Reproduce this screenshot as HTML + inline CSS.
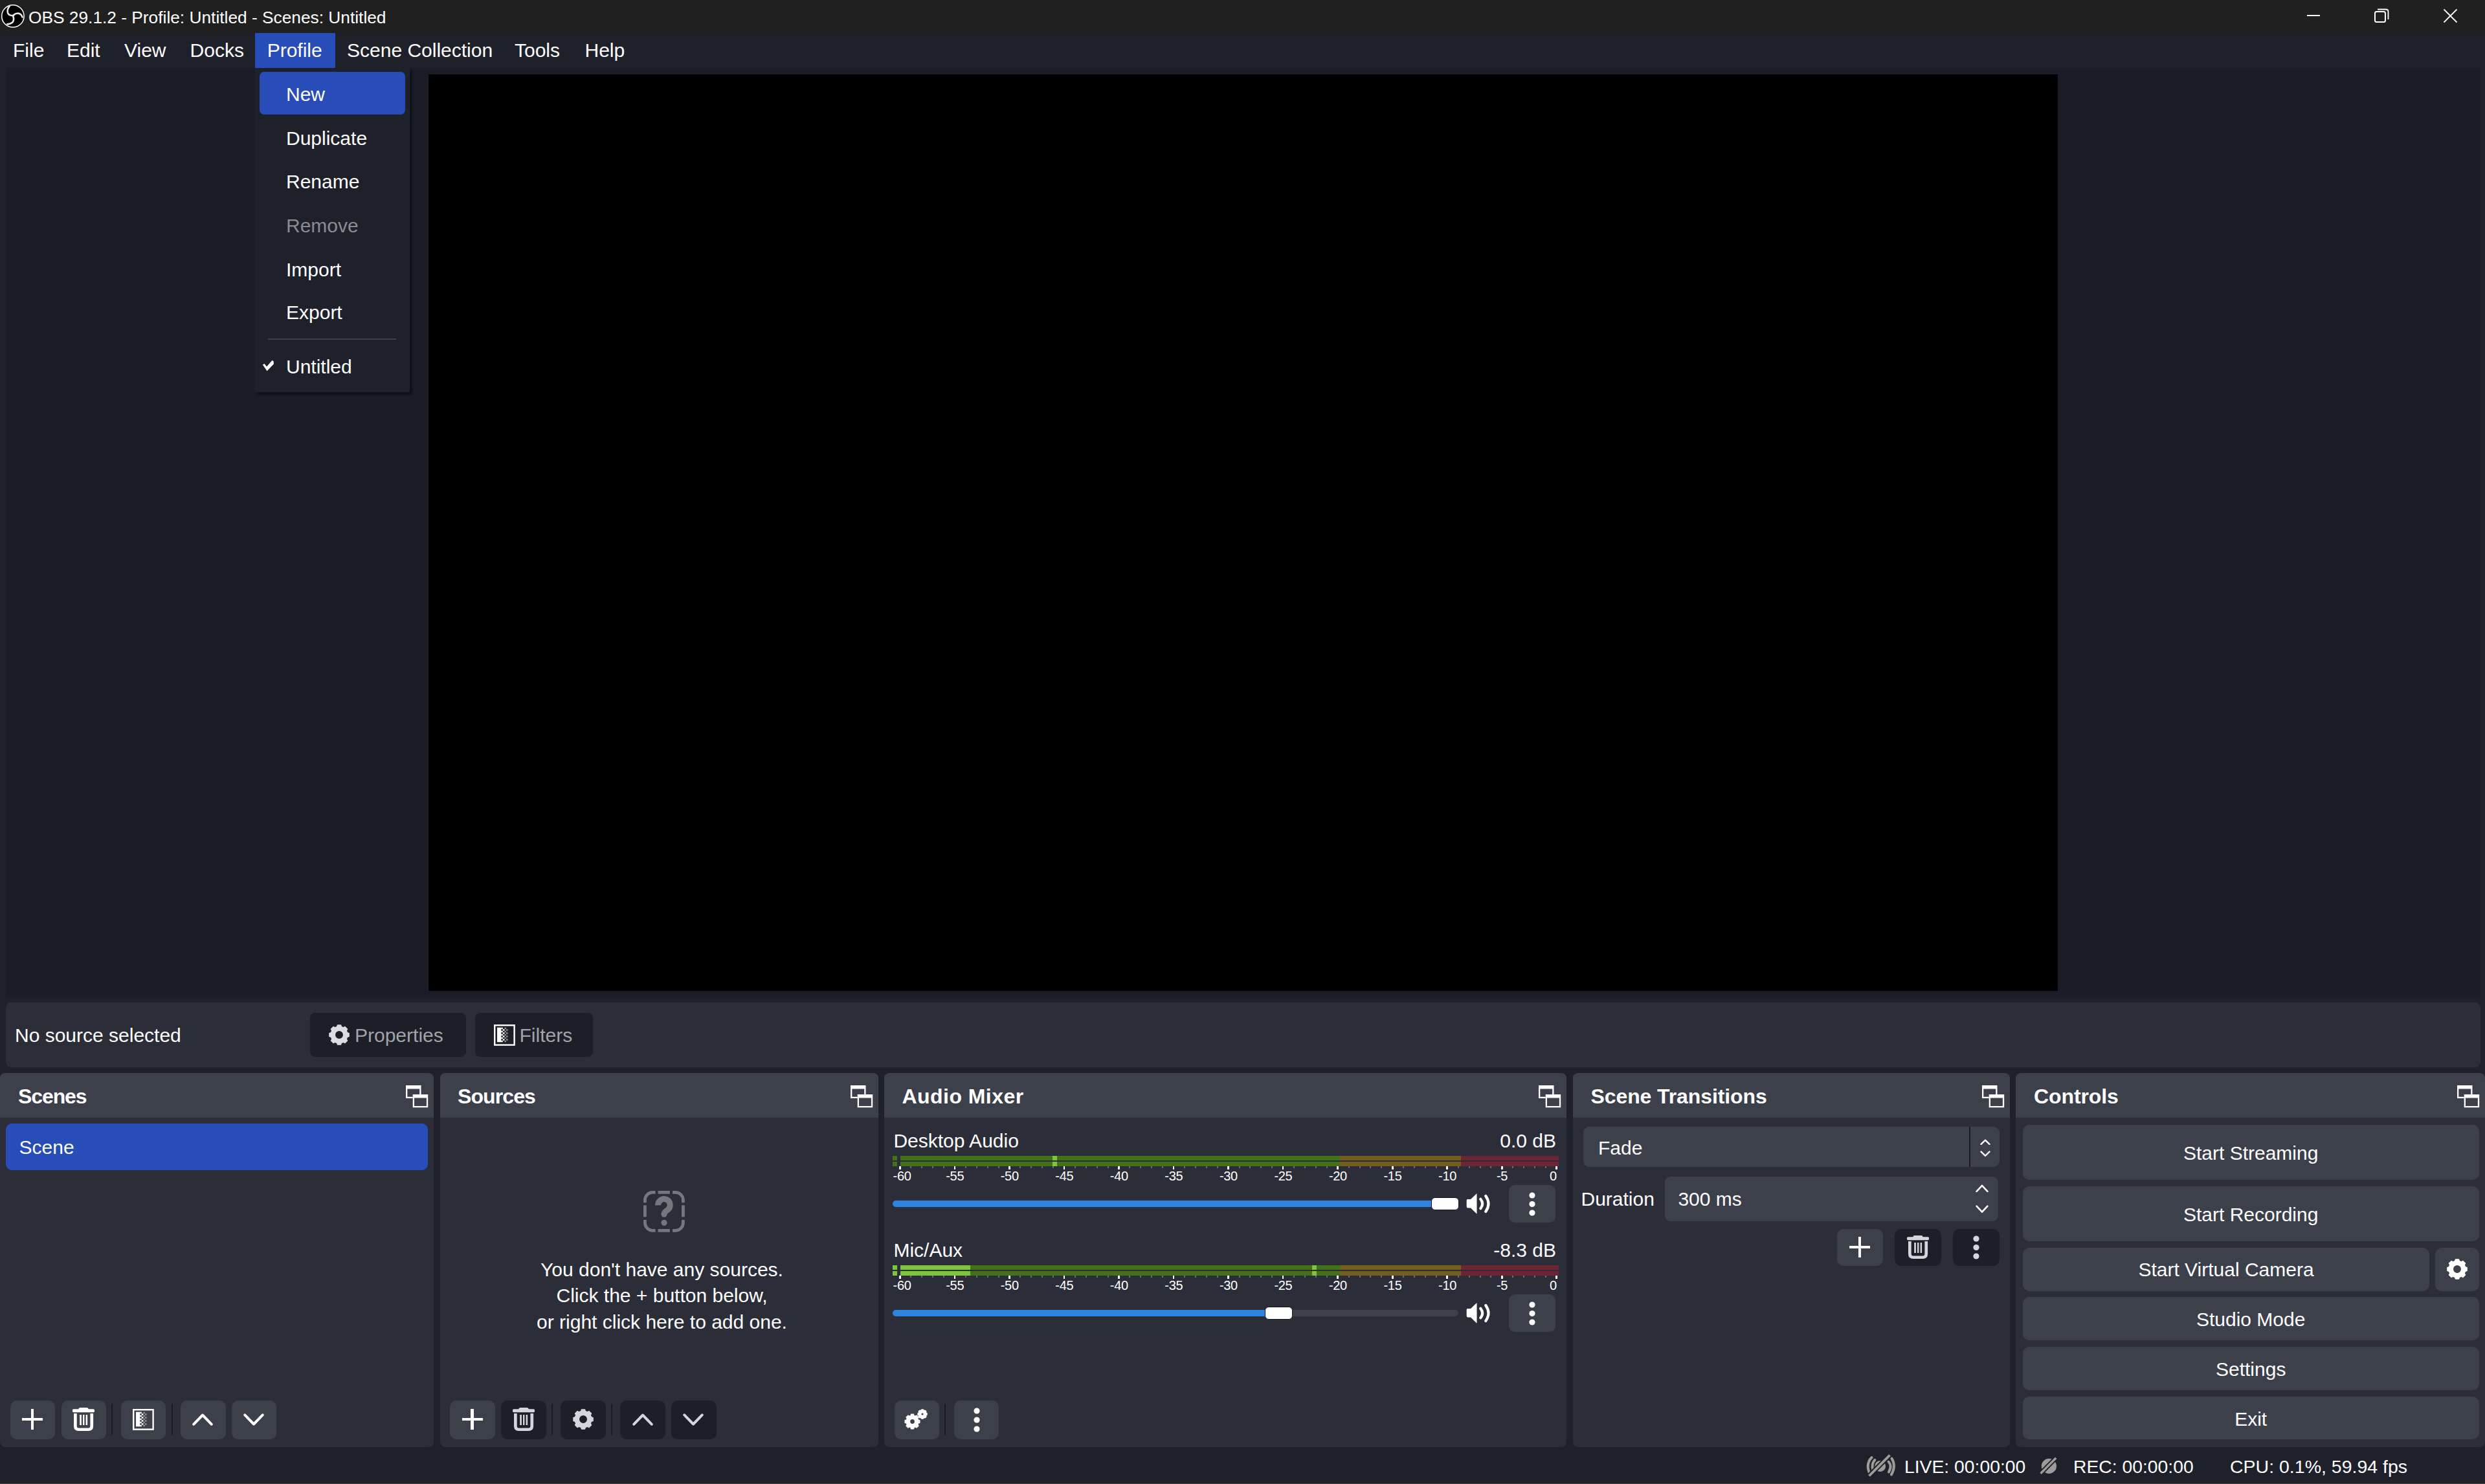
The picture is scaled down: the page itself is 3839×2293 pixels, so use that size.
<!DOCTYPE html>
<html><head><meta charset="utf-8"><style>
html,body{margin:0;padding:0;}
body{width:3839px;height:2293px;overflow:hidden;position:relative;background:#1f212a;font-family:"Liberation Sans",sans-serif;color:#fff;}
div,svg{box-sizing:border-box;}
</style></head><body>
<div style="position:absolute;left:0px;top:0px;width:3839px;height:51px;background:#202020;border-radius:0px;"></div>
<svg style="position:absolute;left:0px;top:5px;" width="40" height="40" viewBox="0 0 40 40"><circle cx="19.9" cy="19.9" r="17.2" fill="#000" stroke="#fff" stroke-width="1.5"/><path d="M14.9 4.3 Q10.5 9 12 15 Q14 19.5 21 19.1" fill="none" stroke="#e8e8e8" stroke-width="2.6" stroke-linecap="round"/><path d="M21 18.3 Q24 15.5 28.2 15.5 Q33 16.5 34.6 21.6" fill="none" stroke="#e8e8e8" stroke-width="2.6" stroke-linecap="round"/><path d="M20.1 20 Q22.5 25.5 19.3 29.6 Q16 32.5 11.3 32.4" fill="none" stroke="#e8e8e8" stroke-width="2.6" stroke-linecap="round"/></svg>
<div style="position:absolute;top:13.94px;font-size:26.3px;font-weight:400;color:#fff;line-height:1;white-space:pre;left:44px;">OBS 29.1.2 - Profile: Untitled - Scenes: Untitled</div>
<div style="position:absolute;left:3564px;top:23px;width:20px;height:2px;background:#fff;border-radius:0px;"></div>
<svg style="position:absolute;left:3668px;top:13px;" width="23" height="23" viewBox="0 0 23 23"><rect x="1" y="5" width="16" height="16" rx="2.5" fill="none" stroke="#fff" stroke-width="2"/><path d="M5 1.5 H18 Q21.5 1.5 21.5 5 V17" fill="none" stroke="#fff" stroke-width="1.8"/></svg>
<svg style="position:absolute;left:3774px;top:13px;" width="23" height="23" viewBox="0 0 23 23"><path d="M1.5 1.5 L21.5 21.5 M21.5 1.5 L1.5 21.5" stroke="#fff" stroke-width="1.8"/></svg>
<div style="position:absolute;left:0px;top:51px;width:3839px;height:54px;background:#1f212a;border-radius:0px;"></div>
<div style="position:absolute;left:394px;top:51px;width:124px;height:54px;background:#284cb8;border-radius:0px;"></div>
<div style="position:absolute;top:62.61px;font-size:30px;font-weight:400;color:#fff;line-height:1;white-space:pre;left:20px;">File</div>
<div style="position:absolute;top:62.61px;font-size:30px;font-weight:400;color:#fff;line-height:1;white-space:pre;left:103px;">Edit</div>
<div style="position:absolute;top:62.61px;font-size:30px;font-weight:400;color:#fff;line-height:1;white-space:pre;left:192px;">View</div>
<div style="position:absolute;top:62.61px;font-size:30px;font-weight:400;color:#fff;line-height:1;white-space:pre;left:293.6px;">Docks</div>
<div style="position:absolute;top:62.61px;font-size:30px;font-weight:400;color:#fff;line-height:1;white-space:pre;left:412.7px;">Profile</div>
<div style="position:absolute;top:62.61px;font-size:30px;font-weight:400;color:#fff;line-height:1;white-space:pre;left:536px;">Scene Collection</div>
<div style="position:absolute;top:62.61px;font-size:30px;font-weight:400;color:#fff;line-height:1;white-space:pre;left:795px;">Tools</div>
<div style="position:absolute;top:62.61px;font-size:30px;font-weight:400;color:#fff;line-height:1;white-space:pre;left:903.5px;">Help</div>
<div style="position:absolute;left:9px;top:105px;width:3823px;height:1436px;background:#1a1c27;border-radius:0px;"></div>
<div style="position:absolute;left:662px;top:115px;width:2517px;height:1416px;background:#000;border-radius:0px;"></div>
<div style="position:absolute;left:394px;top:105px;width:239px;height:500.5px;background:#1f212a;border-radius:0px;box-shadow:4px 4px 3px rgba(0,0,0,0.38);"></div>
<div style="position:absolute;left:401px;top:111px;width:225px;height:66px;background:#284cb8;border-radius:7px;"></div>
<div style="position:absolute;top:131.20px;font-size:30px;font-weight:400;color:#fff;line-height:1;white-space:pre;left:442px;">New</div>
<div style="position:absolute;top:198.91px;font-size:30px;font-weight:400;color:#fff;line-height:1;white-space:pre;left:442px;">Duplicate</div>
<div style="position:absolute;top:266.21px;font-size:30px;font-weight:400;color:#fff;line-height:1;white-space:pre;left:442px;">Rename</div>
<div style="position:absolute;top:333.61px;font-size:30px;font-weight:400;color:#8a8b90;line-height:1;white-space:pre;left:442px;">Remove</div>
<div style="position:absolute;top:401.61px;font-size:30px;font-weight:400;color:#fff;line-height:1;white-space:pre;left:442px;">Import</div>
<div style="position:absolute;top:468.31px;font-size:30px;font-weight:400;color:#fff;line-height:1;white-space:pre;left:442px;">Export</div>
<div style="position:absolute;top:552.11px;font-size:30px;font-weight:400;color:#fff;line-height:1;white-space:pre;left:442px;">Untitled</div>
<div style="position:absolute;left:414px;top:523px;width:198px;height:2px;background:#3c404b;border-radius:0px;"></div>
<svg style="position:absolute;left:405px;top:556px;" width="19" height="18" viewBox="0 0 19 18"><path d="M0.8 7.5 L3.5 6 L7 10.5 L15.5 0.8 L17.8 2.5 L17.8 6.5 L7.5 17.2 Z" fill="#fff"/></svg>
<div style="position:absolute;left:9px;top:1549px;width:3823px;height:99.5px;background:#2b2e38;border-radius:8px;"></div>
<div style="position:absolute;top:1585.40px;font-size:30px;font-weight:400;color:#fff;line-height:1;white-space:pre;left:23px;">No source selected</div>
<div style="position:absolute;left:479px;top:1565px;width:241px;height:67.59999999999991px;background:#1c1e28;border-radius:8px;"></div>
<div style="position:absolute;left:734px;top:1565px;width:181.5px;height:67.59999999999991px;background:#1c1e28;border-radius:8px;"></div>
<div style="position:absolute;top:1584.61px;font-size:30px;font-weight:400;color:#a3a3a6;line-height:1;white-space:pre;left:548px;">Properties</div>
<div style="position:absolute;top:1584.61px;font-size:30px;font-weight:400;color:#a3a3a6;line-height:1;white-space:pre;left:802.5px;">Filters</div>
<div style="position:absolute;left:0px;top:1658px;width:670px;height:577.5px;background:#2b2e38;border-radius:8px;"></div>
<div style="position:absolute;left:0px;top:1658px;width:670px;height:69px;background:#3c404b;border-radius:0px;border-radius:8px 8px 0 0;"></div>
<div style="position:absolute;top:1678.31px;font-size:32px;font-weight:700;color:#fff;line-height:1;white-space:pre;letter-spacing:-1.1px;left:28px;">Scenes</div>
<svg style="position:absolute;left:626.8px;top:1676.8px;" width="35" height="35" viewBox="0 0 35 35"><path fill-rule="evenodd" fill="#fff" d="M0 0 H23.5 V20 H0 Z M2.3 5.5 V17.7 H21.2 V5.5 Z"/><rect x="10.7" y="14" width="23.5" height="20.2" fill="#3c404b"/><path fill-rule="evenodd" fill="#fff" d="M10.7 14 H34.2 V34.2 H10.7 Z M13 19.5 V31.9 H31.9 V19.5 Z"/></svg>
<div style="position:absolute;left:680px;top:1658px;width:677px;height:577.5px;background:#2b2e38;border-radius:8px;"></div>
<div style="position:absolute;left:680px;top:1658px;width:677px;height:69px;background:#3c404b;border-radius:0px;border-radius:8px 8px 0 0;"></div>
<div style="position:absolute;top:1678.31px;font-size:32px;font-weight:700;color:#fff;line-height:1;white-space:pre;letter-spacing:-0.9px;left:707px;">Sources</div>
<svg style="position:absolute;left:1313.8px;top:1676.8px;" width="35" height="35" viewBox="0 0 35 35"><path fill-rule="evenodd" fill="#fff" d="M0 0 H23.5 V20 H0 Z M2.3 5.5 V17.7 H21.2 V5.5 Z"/><rect x="10.7" y="14" width="23.5" height="20.2" fill="#3c404b"/><path fill-rule="evenodd" fill="#fff" d="M10.7 14 H34.2 V34.2 H10.7 Z M13 19.5 V31.9 H31.9 V19.5 Z"/></svg>
<div style="position:absolute;left:1366px;top:1658px;width:1054px;height:577.5px;background:#2b2e38;border-radius:8px;"></div>
<div style="position:absolute;left:1366px;top:1658px;width:1054px;height:69px;background:#3c404b;border-radius:0px;border-radius:8px 8px 0 0;"></div>
<div style="position:absolute;top:1678.31px;font-size:32px;font-weight:700;color:#fff;line-height:1;white-space:pre;letter-spacing:0.45px;left:1393.5px;">Audio Mixer</div>
<svg style="position:absolute;left:2376.8px;top:1676.8px;" width="35" height="35" viewBox="0 0 35 35"><path fill-rule="evenodd" fill="#fff" d="M0 0 H23.5 V20 H0 Z M2.3 5.5 V17.7 H21.2 V5.5 Z"/><rect x="10.7" y="14" width="23.5" height="20.2" fill="#3c404b"/><path fill-rule="evenodd" fill="#fff" d="M10.7 14 H34.2 V34.2 H10.7 Z M13 19.5 V31.9 H31.9 V19.5 Z"/></svg>
<div style="position:absolute;left:2430px;top:1658px;width:675px;height:577.5px;background:#2b2e38;border-radius:8px;"></div>
<div style="position:absolute;left:2430px;top:1658px;width:675px;height:69px;background:#3c404b;border-radius:0px;border-radius:8px 8px 0 0;"></div>
<div style="position:absolute;top:1678.31px;font-size:32px;font-weight:700;color:#fff;line-height:1;white-space:pre;letter-spacing:-0.1px;left:2457.5px;">Scene Transitions</div>
<svg style="position:absolute;left:3061.8px;top:1676.8px;" width="35" height="35" viewBox="0 0 35 35"><path fill-rule="evenodd" fill="#fff" d="M0 0 H23.5 V20 H0 Z M2.3 5.5 V17.7 H21.2 V5.5 Z"/><rect x="10.7" y="14" width="23.5" height="20.2" fill="#3c404b"/><path fill-rule="evenodd" fill="#fff" d="M10.7 14 H34.2 V34.2 H10.7 Z M13 19.5 V31.9 H31.9 V19.5 Z"/></svg>
<div style="position:absolute;left:3114px;top:1658px;width:725px;height:577.5px;background:#2b2e38;border-radius:8px;"></div>
<div style="position:absolute;left:3114px;top:1658px;width:725px;height:69px;background:#3c404b;border-radius:0px;border-radius:8px 8px 0 0;"></div>
<div style="position:absolute;top:1678.31px;font-size:32px;font-weight:700;color:#fff;line-height:1;white-space:pre;letter-spacing:-0.1px;left:3142px;">Controls</div>
<svg style="position:absolute;left:3795.8px;top:1676.8px;" width="35" height="35" viewBox="0 0 35 35"><path fill-rule="evenodd" fill="#fff" d="M0 0 H23.5 V20 H0 Z M2.3 5.5 V17.7 H21.2 V5.5 Z"/><rect x="10.7" y="14" width="23.5" height="20.2" fill="#3c404b"/><path fill-rule="evenodd" fill="#fff" d="M10.7 14 H34.2 V34.2 H10.7 Z M13 19.5 V31.9 H31.9 V19.5 Z"/></svg>
<svg style="position:absolute;left:506.0px;top:1581.0px;" width="36" height="36" viewBox="0 0 36 36"><path fill-rule="evenodd" fill="#dcdde3" stroke="#dcdde3" stroke-width="1.8" stroke-linejoin="round" d="M14.99 5.56 L15.52 3.10 L20.48 3.10 L21.01 5.56 L24.67 7.07 L26.78 5.71 L30.29 9.22 L28.93 11.33 L30.44 14.99 L32.90 15.52 L32.90 20.48 L30.44 21.01 L28.93 24.67 L30.29 26.78 L26.78 30.29 L24.67 28.93 L21.01 30.44 L20.48 32.90 L15.52 32.90 L14.99 30.44 L11.33 28.93 L9.22 30.29 L5.71 26.78 L7.07 24.67 L5.56 21.01 L3.10 20.48 L3.10 15.52 L5.56 14.99 L7.07 11.33 L5.71 9.22 L9.22 5.71 L11.33 7.07Z M24.88 18.00 A6.88 6.88 0 1 0 11.12 18.00 A6.88 6.88 0 1 0 24.88 18.00Z"/></svg>
<svg style="position:absolute;left:762.5px;top:1582.5px;" width="33" height="33" viewBox="0 0 33 33"><rect x="1.2" y="1.2" width="30.4" height="30.4" fill="none" stroke="#fff" stroke-width="2.4"/><rect x="5" y="4.7" width="6.2" height="22.5" fill="#fff"/><rect x="11.2" y="4.7" width="2.6" height="2.5" fill="#fff"/><rect x="16.4" y="4.7" width="2.6" height="2.5" fill="#8a8c92"/><rect x="13.8" y="7.2" width="2.6" height="2.5" fill="#fff"/><rect x="19.0" y="7.2" width="2.6" height="2.5" fill="#8a8c92"/><rect x="11.2" y="9.7" width="2.6" height="2.5" fill="#fff"/><rect x="16.4" y="9.7" width="2.6" height="2.5" fill="#8a8c92"/><rect x="13.8" y="12.2" width="2.6" height="2.5" fill="#fff"/><rect x="19.0" y="12.2" width="2.6" height="2.5" fill="#8a8c92"/><rect x="11.2" y="14.7" width="2.6" height="2.5" fill="#fff"/><rect x="16.4" y="14.7" width="2.6" height="2.5" fill="#8a8c92"/><rect x="13.8" y="17.2" width="2.6" height="2.5" fill="#fff"/><rect x="19.0" y="17.2" width="2.6" height="2.5" fill="#8a8c92"/><rect x="11.2" y="19.7" width="2.6" height="2.5" fill="#fff"/><rect x="16.4" y="19.7" width="2.6" height="2.5" fill="#8a8c92"/><rect x="13.8" y="22.2" width="2.6" height="2.5" fill="#fff"/><rect x="19.0" y="22.2" width="2.6" height="2.5" fill="#8a8c92"/><rect x="11.2" y="24.7" width="2.6" height="2.5" fill="#fff"/><rect x="16.4" y="24.7" width="2.6" height="2.5" fill="#8a8c92"/></svg>
<div style="position:absolute;left:9px;top:1736px;width:652px;height:72px;background:#284cb8;border-radius:9px;"></div>
<div style="position:absolute;top:1758.31px;font-size:30px;font-weight:400;color:#fff;line-height:1;white-space:pre;left:29.6px;">Scene</div>
<div style="position:absolute;left:16px;top:2164px;width:69px;height:60.30000000000018px;background:#3c404b;border-radius:10px;"></div>
<div style="position:absolute;left:94.6px;top:2164px;width:69.4px;height:60.30000000000018px;background:#3c404b;border-radius:10px;"></div>
<div style="position:absolute;left:186.8px;top:2164px;width:69.19999999999999px;height:60.30000000000018px;background:#3c404b;border-radius:10px;"></div>
<div style="position:absolute;left:279px;top:2164px;width:69.69999999999999px;height:60.30000000000018px;background:#3c404b;border-radius:10px;"></div>
<div style="position:absolute;left:357.7px;top:2164px;width:69.30000000000001px;height:60.30000000000018px;background:#3c404b;border-radius:10px;"></div>
<div style="position:absolute;left:172px;top:2169px;width:2px;height:48px;background:#1b1c23;border-radius:0px;"></div>
<div style="position:absolute;left:265px;top:2169px;width:2px;height:48px;background:#1b1c23;border-radius:0px;"></div>
<div style="position:absolute;left:34px;top:2190.8px;width:32px;height:4.399999999999636px;background:#fff;border-radius:0px;"></div>
<div style="position:absolute;left:47.7px;top:2176.8px;width:4.599999999999994px;height:32.399999999999636px;background:#fff;border-radius:0px;"></div>
<svg style="position:absolute;left:112px;top:2175px;" width="34" height="37" viewBox="0 0 34 37"><rect x="9.4" y="0" width="15.2" height="5" rx="2.5" fill="#fff"/><rect x="0" y="2.2" width="34" height="5" rx="1.6" fill="#fff"/><path d="M4.35 9 V28.5 Q4.35 33.75 9.6 33.75 H24.5 Q29.75 33.75 29.75 28.5 V9" fill="none" stroke="#fff" stroke-width="4.7"/><rect x="11.2" y="11" width="2.7" height="16" fill="#fff"/><rect x="16" y="11" width="2.4" height="16" fill="#fff"/><rect x="20.6" y="11" width="2.5" height="16" fill="#fff"/></svg>
<svg style="position:absolute;left:204.5px;top:2176.8px;" width="33" height="33" viewBox="0 0 33 33"><rect x="1.2" y="1.2" width="30.4" height="30.4" fill="none" stroke="#fff" stroke-width="2.4"/><rect x="5" y="4.7" width="6.2" height="22.5" fill="#fff"/><rect x="11.2" y="4.7" width="2.6" height="2.5" fill="#fff"/><rect x="16.4" y="4.7" width="2.6" height="2.5" fill="#8a8c92"/><rect x="13.8" y="7.2" width="2.6" height="2.5" fill="#fff"/><rect x="19.0" y="7.2" width="2.6" height="2.5" fill="#8a8c92"/><rect x="11.2" y="9.7" width="2.6" height="2.5" fill="#fff"/><rect x="16.4" y="9.7" width="2.6" height="2.5" fill="#8a8c92"/><rect x="13.8" y="12.2" width="2.6" height="2.5" fill="#fff"/><rect x="19.0" y="12.2" width="2.6" height="2.5" fill="#8a8c92"/><rect x="11.2" y="14.7" width="2.6" height="2.5" fill="#fff"/><rect x="16.4" y="14.7" width="2.6" height="2.5" fill="#8a8c92"/><rect x="13.8" y="17.2" width="2.6" height="2.5" fill="#fff"/><rect x="19.0" y="17.2" width="2.6" height="2.5" fill="#8a8c92"/><rect x="11.2" y="19.7" width="2.6" height="2.5" fill="#fff"/><rect x="16.4" y="19.7" width="2.6" height="2.5" fill="#8a8c92"/><rect x="13.8" y="22.2" width="2.6" height="2.5" fill="#fff"/><rect x="19.0" y="22.2" width="2.6" height="2.5" fill="#8a8c92"/><rect x="11.2" y="24.7" width="2.6" height="2.5" fill="#fff"/><rect x="16.4" y="24.7" width="2.6" height="2.5" fill="#8a8c92"/></svg>
<svg style="position:absolute;left:297px;top:2183.7px;" width="32" height="19" viewBox="0 0 32 19"><path d="M2.3 16.7 L16.0 2.5 L29.7 16.7" fill="none" stroke="#fff" stroke-width="4" stroke-linecap="round" stroke-linejoin="round"/></svg>
<svg style="position:absolute;left:376px;top:2183.7px;" width="32" height="19" viewBox="0 0 32 19"><path d="M2.3 2.3 L16.0 16.5 L29.7 2.3" fill="none" stroke="#fff" stroke-width="4" stroke-linecap="round" stroke-linejoin="round"/></svg>
<svg style="position:absolute;left:994px;top:1840px;" width="64" height="64" viewBox="0 0 64 64"><rect x="2.4" y="2.4" width="59" height="59" rx="12" fill="none" stroke="#76777d" stroke-width="4.8"/><rect x="18.6" y="0" width="4" height="8" fill="#2b2e38"/><rect x="40.8" y="0" width="4.2" height="8" fill="#2b2e38"/><rect x="18.6" y="56" width="4" height="8" fill="#2b2e38"/><rect x="40.8" y="56" width="4.2" height="8" fill="#2b2e38"/><rect x="0" y="18.3" width="8" height="4" fill="#2b2e38"/><rect x="0" y="40.3" width="8" height="4.6" fill="#2b2e38"/><rect x="56" y="18.3" width="8" height="4" fill="#2b2e38"/><rect x="56" y="40.3" width="8" height="4.6" fill="#2b2e38"/><path d="M22.6 22.3 A9.3 9.3 0 1 1 37.2 29.6 L35 31.3 Q32 33.6 32 36" fill="none" stroke="#76777d" stroke-width="9"/><circle cx="32" cy="36.2" r="4.5" fill="#76777d"/><circle cx="32" cy="49.3" r="4.6" fill="#76777d"/></svg>
<div style="position:absolute;top:1946.61px;font-size:30px;font-weight:400;color:#fff;line-height:1;white-space:pre;left:22.5px;width:2000px;text-align:center;">You don't have any sources.</div>
<div style="position:absolute;top:1987.11px;font-size:30px;font-weight:400;color:#fff;line-height:1;white-space:pre;left:22.5px;width:2000px;text-align:center;">Click the + button below,</div>
<div style="position:absolute;top:2027.61px;font-size:30px;font-weight:400;color:#fff;line-height:1;white-space:pre;left:22.5px;width:2000px;text-align:center;">or right click here to add one.</div>
<div style="position:absolute;left:695px;top:2164px;width:69.79999999999995px;height:60.30000000000018px;background:#3c404b;border-radius:10px;"></div>
<div style="position:absolute;left:774px;top:2164px;width:69.5px;height:60.30000000000018px;background:#1c1e28;border-radius:10px;"></div>
<div style="position:absolute;left:866px;top:2164px;width:70px;height:60.30000000000018px;background:#1c1e28;border-radius:10px;"></div>
<div style="position:absolute;left:958.4px;top:2164px;width:69.60000000000002px;height:60.30000000000018px;background:#1c1e28;border-radius:10px;"></div>
<div style="position:absolute;left:1037px;top:2164px;width:69.70000000000005px;height:60.30000000000018px;background:#1c1e28;border-radius:10px;"></div>
<div style="position:absolute;left:852px;top:2169px;width:2px;height:48px;background:#1b1c23;border-radius:0px;"></div>
<div style="position:absolute;left:944px;top:2169px;width:2px;height:48px;background:#1b1c23;border-radius:0px;"></div>
<div style="position:absolute;left:713.5px;top:2190.8px;width:32.0px;height:4.399999999999636px;background:#fff;border-radius:0px;"></div>
<div style="position:absolute;left:727.2px;top:2176.8px;width:4.599999999999909px;height:32.399999999999636px;background:#fff;border-radius:0px;"></div>
<svg style="position:absolute;left:791.5px;top:2175px;" width="34" height="37" viewBox="0 0 34 37"><rect x="9.4" y="0" width="15.2" height="5" rx="2.5" fill="#d5d6dc"/><rect x="0" y="2.2" width="34" height="5" rx="1.6" fill="#d5d6dc"/><path d="M4.35 9 V28.5 Q4.35 33.75 9.6 33.75 H24.5 Q29.75 33.75 29.75 28.5 V9" fill="none" stroke="#d5d6dc" stroke-width="4.7"/><rect x="11.2" y="11" width="2.7" height="16" fill="#d5d6dc"/><rect x="16" y="11" width="2.4" height="16" fill="#d5d6dc"/><rect x="20.6" y="11" width="2.5" height="16" fill="#d5d6dc"/></svg>
<svg style="position:absolute;left:882.5px;top:2175.0px;" width="36" height="36" viewBox="0 0 36 36"><path fill-rule="evenodd" fill="#d5d6dc" stroke="#d5d6dc" stroke-width="1.8" stroke-linejoin="round" d="M14.99 5.56 L15.52 3.10 L20.48 3.10 L21.01 5.56 L24.67 7.07 L26.78 5.71 L30.29 9.22 L28.93 11.33 L30.44 14.99 L32.90 15.52 L32.90 20.48 L30.44 21.01 L28.93 24.67 L30.29 26.78 L26.78 30.29 L24.67 28.93 L21.01 30.44 L20.48 32.90 L15.52 32.90 L14.99 30.44 L11.33 28.93 L9.22 30.29 L5.71 26.78 L7.07 24.67 L5.56 21.01 L3.10 20.48 L3.10 15.52 L5.56 14.99 L7.07 11.33 L5.71 9.22 L9.22 5.71 L11.33 7.07Z M24.88 18.00 A6.88 6.88 0 1 0 11.12 18.00 A6.88 6.88 0 1 0 24.88 18.00Z"/></svg>
<svg style="position:absolute;left:977px;top:2183.7px;" width="32" height="19" viewBox="0 0 32 19"><path d="M2.3 16.7 L16.0 2.5 L29.7 16.7" fill="none" stroke="#d5d6dc" stroke-width="4" stroke-linecap="round" stroke-linejoin="round"/></svg>
<svg style="position:absolute;left:1055px;top:2183.7px;" width="32" height="19" viewBox="0 0 32 19"><path d="M2.3 2.3 L16.0 16.5 L29.7 2.3" fill="none" stroke="#d5d6dc" stroke-width="4" stroke-linecap="round" stroke-linejoin="round"/></svg>
<div style="position:absolute;top:1747.61px;font-size:30px;font-weight:400;color:#fff;line-height:1;white-space:pre;left:1380.4px;">Desktop Audio</div>
<div style="position:absolute;top:1747.61px;font-size:30px;font-weight:400;color:#fff;line-height:1;white-space:pre;left:404px;width:2000px;text-align:right;">0.0 dB</div>
<div style="position:absolute;left:1379px;top:1786px;width:7px;height:7px;background:#44701a;border-radius:0px;"></div>
<div style="position:absolute;left:1391px;top:1786px;width:679px;height:7px;background:#44701a;border-radius:0px;"></div>
<div style="position:absolute;left:2070px;top:1786px;width:187px;height:7px;background:#745e1f;border-radius:0px;"></div>
<div style="position:absolute;left:2257px;top:1786px;width:151px;height:7px;background:#6e2433;border-radius:0px;"></div>
<div style="position:absolute;left:1626px;top:1786px;width:7px;height:7px;background:#7cc43a;border-radius:0px;"></div>
<div style="position:absolute;left:1379px;top:1795px;width:7px;height:7px;background:#44701a;border-radius:0px;"></div>
<div style="position:absolute;left:1391px;top:1795px;width:679px;height:7px;background:#44701a;border-radius:0px;"></div>
<div style="position:absolute;left:2070px;top:1795px;width:187px;height:7px;background:#745e1f;border-radius:0px;"></div>
<div style="position:absolute;left:2257px;top:1795px;width:151px;height:7px;background:#6e2433;border-radius:0px;"></div>
<div style="position:absolute;left:1626px;top:1795px;width:7px;height:7px;background:#7cc43a;border-radius:0px;"></div>
<div style="position:absolute;left:1389.0px;top:1801.5px;width:2.7999999999999545px;height:5.5px;background:#fff;border-radius:0px;"></div>
<div style="position:absolute;left:1406.3px;top:1802px;width:2.0px;height:3px;background:#6a6b70;border-radius:0px;"></div>
<div style="position:absolute;left:1423.2px;top:1802px;width:2.0px;height:3px;background:#6a6b70;border-radius:0px;"></div>
<div style="position:absolute;left:1440.1px;top:1802px;width:2.0px;height:3px;background:#6a6b70;border-radius:0px;"></div>
<div style="position:absolute;left:1457.0px;top:1802px;width:2.0px;height:3px;background:#6a6b70;border-radius:0px;"></div>
<div style="position:absolute;left:1473.5px;top:1801.5px;width:2.7999999999999545px;height:5.5px;background:#fff;border-radius:0px;"></div>
<div style="position:absolute;left:1490.8px;top:1802px;width:2.0px;height:3px;background:#6a6b70;border-radius:0px;"></div>
<div style="position:absolute;left:1507.7px;top:1802px;width:2.0px;height:3px;background:#6a6b70;border-radius:0px;"></div>
<div style="position:absolute;left:1524.7px;top:1802px;width:2.0px;height:3px;background:#6a6b70;border-radius:0px;"></div>
<div style="position:absolute;left:1541.6px;top:1802px;width:2.0px;height:3px;background:#6a6b70;border-radius:0px;"></div>
<div style="position:absolute;left:1558.1px;top:1801.5px;width:2.800000000000182px;height:5.5px;background:#fff;border-radius:0px;"></div>
<div style="position:absolute;left:1575.4px;top:1802px;width:2.0px;height:3px;background:#6a6b70;border-radius:0px;"></div>
<div style="position:absolute;left:1592.3px;top:1802px;width:2.0px;height:3px;background:#6a6b70;border-radius:0px;"></div>
<div style="position:absolute;left:1609.2px;top:1802px;width:2.0px;height:3px;background:#6a6b70;border-radius:0px;"></div>
<div style="position:absolute;left:1626.1px;top:1802px;width:2.0px;height:3px;background:#6a6b70;border-radius:0px;"></div>
<div style="position:absolute;left:1642.6px;top:1801.5px;width:2.800000000000182px;height:5.5px;background:#fff;border-radius:0px;"></div>
<div style="position:absolute;left:1659.9px;top:1802px;width:2.0px;height:3px;background:#6a6b70;border-radius:0px;"></div>
<div style="position:absolute;left:1676.8px;top:1802px;width:2.0px;height:3px;background:#6a6b70;border-radius:0px;"></div>
<div style="position:absolute;left:1693.7px;top:1802px;width:2.0px;height:3px;background:#6a6b70;border-radius:0px;"></div>
<div style="position:absolute;left:1710.6px;top:1802px;width:2.0px;height:3px;background:#6a6b70;border-radius:0px;"></div>
<div style="position:absolute;left:1727.1px;top:1801.5px;width:2.800000000000182px;height:5.5px;background:#fff;border-radius:0px;"></div>
<div style="position:absolute;left:1744.4px;top:1802px;width:2.0px;height:3px;background:#6a6b70;border-radius:0px;"></div>
<div style="position:absolute;left:1761.3px;top:1802px;width:2.0px;height:3px;background:#6a6b70;border-radius:0px;"></div>
<div style="position:absolute;left:1778.3px;top:1802px;width:2.0px;height:3px;background:#6a6b70;border-radius:0px;"></div>
<div style="position:absolute;left:1795.2px;top:1802px;width:2.0px;height:3px;background:#6a6b70;border-radius:0px;"></div>
<div style="position:absolute;left:1811.7px;top:1801.5px;width:2.7999999999999545px;height:5.5px;background:#fff;border-radius:0px;"></div>
<div style="position:absolute;left:1829.0px;top:1802px;width:2.0px;height:3px;background:#6a6b70;border-radius:0px;"></div>
<div style="position:absolute;left:1845.9px;top:1802px;width:2.0px;height:3px;background:#6a6b70;border-radius:0px;"></div>
<div style="position:absolute;left:1862.8px;top:1802px;width:2.0px;height:3px;background:#6a6b70;border-radius:0px;"></div>
<div style="position:absolute;left:1879.7px;top:1802px;width:2.0px;height:3px;background:#6a6b70;border-radius:0px;"></div>
<div style="position:absolute;left:1896.2px;top:1801.5px;width:2.7999999999999545px;height:5.5px;background:#fff;border-radius:0px;"></div>
<div style="position:absolute;left:1913.5px;top:1802px;width:2.0px;height:3px;background:#6a6b70;border-radius:0px;"></div>
<div style="position:absolute;left:1930.4px;top:1802px;width:2.0px;height:3px;background:#6a6b70;border-radius:0px;"></div>
<div style="position:absolute;left:1947.3px;top:1802px;width:2.0px;height:3px;background:#6a6b70;border-radius:0px;"></div>
<div style="position:absolute;left:1964.2px;top:1802px;width:2.0px;height:3px;background:#6a6b70;border-radius:0px;"></div>
<div style="position:absolute;left:1980.7px;top:1801.5px;width:2.7999999999999545px;height:5.5px;background:#fff;border-radius:0px;"></div>
<div style="position:absolute;left:1998.0px;top:1802px;width:2.0px;height:3px;background:#6a6b70;border-radius:0px;"></div>
<div style="position:absolute;left:2014.9px;top:1802px;width:2.0px;height:3px;background:#6a6b70;border-radius:0px;"></div>
<div style="position:absolute;left:2031.9px;top:1802px;width:2.0px;height:3px;background:#6a6b70;border-radius:0px;"></div>
<div style="position:absolute;left:2048.8px;top:1802px;width:2.0px;height:3px;background:#6a6b70;border-radius:0px;"></div>
<div style="position:absolute;left:2065.3px;top:1801.5px;width:2.799999999999727px;height:5.5px;background:#fff;border-radius:0px;"></div>
<div style="position:absolute;left:2082.6px;top:1802px;width:2.0px;height:3px;background:#6a6b70;border-radius:0px;"></div>
<div style="position:absolute;left:2099.5px;top:1802px;width:2.0px;height:3px;background:#6a6b70;border-radius:0px;"></div>
<div style="position:absolute;left:2116.4px;top:1802px;width:2.0px;height:3px;background:#6a6b70;border-radius:0px;"></div>
<div style="position:absolute;left:2133.3px;top:1802px;width:2.0px;height:3px;background:#6a6b70;border-radius:0px;"></div>
<div style="position:absolute;left:2149.8px;top:1801.5px;width:2.799999999999727px;height:5.5px;background:#fff;border-radius:0px;"></div>
<div style="position:absolute;left:2167.1px;top:1802px;width:2.0px;height:3px;background:#6a6b70;border-radius:0px;"></div>
<div style="position:absolute;left:2184.0px;top:1802px;width:2.0px;height:3px;background:#6a6b70;border-radius:0px;"></div>
<div style="position:absolute;left:2200.9px;top:1802px;width:2.0px;height:3px;background:#6a6b70;border-radius:0px;"></div>
<div style="position:absolute;left:2217.8px;top:1802px;width:2.0px;height:3px;background:#6a6b70;border-radius:0px;"></div>
<div style="position:absolute;left:2234.3px;top:1801.5px;width:2.799999999999727px;height:5.5px;background:#fff;border-radius:0px;"></div>
<div style="position:absolute;left:2251.6px;top:1802px;width:2.0px;height:3px;background:#6a6b70;border-radius:0px;"></div>
<div style="position:absolute;left:2268.5px;top:1802px;width:2.0px;height:3px;background:#6a6b70;border-radius:0px;"></div>
<div style="position:absolute;left:2285.5px;top:1802px;width:2.0px;height:3px;background:#6a6b70;border-radius:0px;"></div>
<div style="position:absolute;left:2302.4px;top:1802px;width:2.0px;height:3px;background:#6a6b70;border-radius:0px;"></div>
<div style="position:absolute;left:2318.9px;top:1801.5px;width:2.799999999999727px;height:5.5px;background:#fff;border-radius:0px;"></div>
<div style="position:absolute;left:2336.2px;top:1802px;width:2.0px;height:3px;background:#6a6b70;border-radius:0px;"></div>
<div style="position:absolute;left:2353.1px;top:1802px;width:2.0px;height:3px;background:#6a6b70;border-radius:0px;"></div>
<div style="position:absolute;left:2370.0px;top:1802px;width:2.0px;height:3px;background:#6a6b70;border-radius:0px;"></div>
<div style="position:absolute;left:2386.9px;top:1802px;width:2.0px;height:3px;background:#6a6b70;border-radius:0px;"></div>
<div style="position:absolute;left:2403.4px;top:1801.5px;width:2.799999999999727px;height:5.5px;background:#fff;border-radius:0px;"></div>
<div style="position:absolute;top:1806.97px;font-size:20px;font-weight:400;color:#fff;line-height:1;white-space:pre;letter-spacing:-0.3px;left:1379.6px;">-60</div>
<div style="position:absolute;top:1806.97px;font-size:20px;font-weight:400;color:#fff;line-height:1;white-space:pre;letter-spacing:-0.3px;left:475.23333333333335px;width:2000px;text-align:center;">-55</div>
<div style="position:absolute;top:1806.97px;font-size:20px;font-weight:400;color:#fff;line-height:1;white-space:pre;letter-spacing:-0.3px;left:559.7666666666667px;width:2000px;text-align:center;">-50</div>
<div style="position:absolute;top:1806.97px;font-size:20px;font-weight:400;color:#fff;line-height:1;white-space:pre;letter-spacing:-0.3px;left:644.3000000000002px;width:2000px;text-align:center;">-45</div>
<div style="position:absolute;top:1806.97px;font-size:20px;font-weight:400;color:#fff;line-height:1;white-space:pre;letter-spacing:-0.3px;left:728.8333333333335px;width:2000px;text-align:center;">-40</div>
<div style="position:absolute;top:1806.97px;font-size:20px;font-weight:400;color:#fff;line-height:1;white-space:pre;letter-spacing:-0.3px;left:813.3666666666668px;width:2000px;text-align:center;">-35</div>
<div style="position:absolute;top:1806.97px;font-size:20px;font-weight:400;color:#fff;line-height:1;white-space:pre;letter-spacing:-0.3px;left:897.9000000000001px;width:2000px;text-align:center;">-30</div>
<div style="position:absolute;top:1806.97px;font-size:20px;font-weight:400;color:#fff;line-height:1;white-space:pre;letter-spacing:-0.3px;left:982.4333333333336px;width:2000px;text-align:center;">-25</div>
<div style="position:absolute;top:1806.97px;font-size:20px;font-weight:400;color:#fff;line-height:1;white-space:pre;letter-spacing:-0.3px;left:1066.9666666666672px;width:2000px;text-align:center;">-20</div>
<div style="position:absolute;top:1806.97px;font-size:20px;font-weight:400;color:#fff;line-height:1;white-space:pre;letter-spacing:-0.3px;left:1151.5000000000005px;width:2000px;text-align:center;">-15</div>
<div style="position:absolute;top:1806.97px;font-size:20px;font-weight:400;color:#fff;line-height:1;white-space:pre;letter-spacing:-0.3px;left:1236.0333333333338px;width:2000px;text-align:center;">-10</div>
<div style="position:absolute;top:1806.97px;font-size:20px;font-weight:400;color:#fff;line-height:1;white-space:pre;letter-spacing:-0.3px;left:1320.566666666667px;width:2000px;text-align:center;">-5</div>
<div style="position:absolute;top:1806.97px;font-size:20px;font-weight:400;color:#fff;line-height:1;white-space:pre;left:405px;width:2000px;text-align:right;">0</div>
<div style="position:absolute;left:1379px;top:1855.2px;width:874px;height:9.5px;background:#3c404b;border-radius:5px;"></div>
<div style="position:absolute;left:1379px;top:1855.2px;width:833px;height:9.5px;background:#2d83df;border-radius:0px;border-radius:5px 0 0 5px;"></div>
<div style="position:absolute;left:2211px;top:1850px;width:42.5px;height:20px;background:#fff;border-radius:6px;border:1px solid #15161c;"></div>
<svg style="position:absolute;left:2265px;top:1843px;" width="38" height="34" viewBox="0 0 38 34"><path d="M2 10 Q0.7 10 0.7 12 V21 Q0.7 23.5 3 23.5 H7 L16.5 32.8 V1 L7 10 Z" fill="#fff"/><path d="M22.3 9.8 Q28 17 22.3 24.2" fill="none" stroke="#fff" stroke-width="4.2" stroke-linecap="round"/><path d="M30.3 5 Q38.6 17 30.3 29" fill="none" stroke="#fff" stroke-width="4.2" stroke-linecap="round"/></svg>
<div style="position:absolute;left:2331px;top:1831px;width:72px;height:57.799999999999955px;background:#3c404b;border-radius:9px;"></div>
<svg style="position:absolute;left:2361px;top:1840.5px;" width="12" height="39.0" viewBox="0 0 12 39.0"><circle cx="6" cy="6.0" r="4.6" fill="#fff"/><circle cx="6" cy="19.5" r="4.6" fill="#fff"/><circle cx="6" cy="33.0" r="4.6" fill="#fff"/></svg>
<div style="position:absolute;top:1916.61px;font-size:30px;font-weight:400;color:#fff;line-height:1;white-space:pre;left:1380.4px;">Mic/Aux</div>
<div style="position:absolute;top:1916.61px;font-size:30px;font-weight:400;color:#fff;line-height:1;white-space:pre;left:404px;width:2000px;text-align:right;">-8.3 dB</div>
<div style="position:absolute;left:1379px;top:1955px;width:7px;height:7px;background:#44701a;border-radius:0px;"></div>
<div style="position:absolute;left:1391px;top:1955px;width:679px;height:7px;background:#44701a;border-radius:0px;"></div>
<div style="position:absolute;left:2070px;top:1955px;width:187px;height:7px;background:#745e1f;border-radius:0px;"></div>
<div style="position:absolute;left:2257px;top:1955px;width:151px;height:7px;background:#6e2433;border-radius:0px;"></div>
<div style="position:absolute;left:1379px;top:1955px;width:7px;height:7px;background:#7cc43a;border-radius:0px;"></div>
<div style="position:absolute;left:1391px;top:1955px;width:108px;height:7px;background:#7cc43a;border-radius:0px;"></div>
<div style="position:absolute;left:2027px;top:1955px;width:7px;height:7px;background:#7cc43a;border-radius:0px;"></div>
<div style="position:absolute;left:1379px;top:1964px;width:7px;height:7px;background:#44701a;border-radius:0px;"></div>
<div style="position:absolute;left:1391px;top:1964px;width:679px;height:7px;background:#44701a;border-radius:0px;"></div>
<div style="position:absolute;left:2070px;top:1964px;width:187px;height:7px;background:#745e1f;border-radius:0px;"></div>
<div style="position:absolute;left:2257px;top:1964px;width:151px;height:7px;background:#6e2433;border-radius:0px;"></div>
<div style="position:absolute;left:1379px;top:1964px;width:7px;height:7px;background:#7cc43a;border-radius:0px;"></div>
<div style="position:absolute;left:1391px;top:1964px;width:108px;height:7px;background:#7cc43a;border-radius:0px;"></div>
<div style="position:absolute;left:2027px;top:1964px;width:7px;height:7px;background:#7cc43a;border-radius:0px;"></div>
<div style="position:absolute;left:1389.0px;top:1970.5px;width:2.7999999999999545px;height:5.5px;background:#fff;border-radius:0px;"></div>
<div style="position:absolute;left:1406.3px;top:1971px;width:2.0px;height:3px;background:#6a6b70;border-radius:0px;"></div>
<div style="position:absolute;left:1423.2px;top:1971px;width:2.0px;height:3px;background:#6a6b70;border-radius:0px;"></div>
<div style="position:absolute;left:1440.1px;top:1971px;width:2.0px;height:3px;background:#6a6b70;border-radius:0px;"></div>
<div style="position:absolute;left:1457.0px;top:1971px;width:2.0px;height:3px;background:#6a6b70;border-radius:0px;"></div>
<div style="position:absolute;left:1473.5px;top:1970.5px;width:2.7999999999999545px;height:5.5px;background:#fff;border-radius:0px;"></div>
<div style="position:absolute;left:1490.8px;top:1971px;width:2.0px;height:3px;background:#6a6b70;border-radius:0px;"></div>
<div style="position:absolute;left:1507.7px;top:1971px;width:2.0px;height:3px;background:#6a6b70;border-radius:0px;"></div>
<div style="position:absolute;left:1524.7px;top:1971px;width:2.0px;height:3px;background:#6a6b70;border-radius:0px;"></div>
<div style="position:absolute;left:1541.6px;top:1971px;width:2.0px;height:3px;background:#6a6b70;border-radius:0px;"></div>
<div style="position:absolute;left:1558.1px;top:1970.5px;width:2.800000000000182px;height:5.5px;background:#fff;border-radius:0px;"></div>
<div style="position:absolute;left:1575.4px;top:1971px;width:2.0px;height:3px;background:#6a6b70;border-radius:0px;"></div>
<div style="position:absolute;left:1592.3px;top:1971px;width:2.0px;height:3px;background:#6a6b70;border-radius:0px;"></div>
<div style="position:absolute;left:1609.2px;top:1971px;width:2.0px;height:3px;background:#6a6b70;border-radius:0px;"></div>
<div style="position:absolute;left:1626.1px;top:1971px;width:2.0px;height:3px;background:#6a6b70;border-radius:0px;"></div>
<div style="position:absolute;left:1642.6px;top:1970.5px;width:2.800000000000182px;height:5.5px;background:#fff;border-radius:0px;"></div>
<div style="position:absolute;left:1659.9px;top:1971px;width:2.0px;height:3px;background:#6a6b70;border-radius:0px;"></div>
<div style="position:absolute;left:1676.8px;top:1971px;width:2.0px;height:3px;background:#6a6b70;border-radius:0px;"></div>
<div style="position:absolute;left:1693.7px;top:1971px;width:2.0px;height:3px;background:#6a6b70;border-radius:0px;"></div>
<div style="position:absolute;left:1710.6px;top:1971px;width:2.0px;height:3px;background:#6a6b70;border-radius:0px;"></div>
<div style="position:absolute;left:1727.1px;top:1970.5px;width:2.800000000000182px;height:5.5px;background:#fff;border-radius:0px;"></div>
<div style="position:absolute;left:1744.4px;top:1971px;width:2.0px;height:3px;background:#6a6b70;border-radius:0px;"></div>
<div style="position:absolute;left:1761.3px;top:1971px;width:2.0px;height:3px;background:#6a6b70;border-radius:0px;"></div>
<div style="position:absolute;left:1778.3px;top:1971px;width:2.0px;height:3px;background:#6a6b70;border-radius:0px;"></div>
<div style="position:absolute;left:1795.2px;top:1971px;width:2.0px;height:3px;background:#6a6b70;border-radius:0px;"></div>
<div style="position:absolute;left:1811.7px;top:1970.5px;width:2.7999999999999545px;height:5.5px;background:#fff;border-radius:0px;"></div>
<div style="position:absolute;left:1829.0px;top:1971px;width:2.0px;height:3px;background:#6a6b70;border-radius:0px;"></div>
<div style="position:absolute;left:1845.9px;top:1971px;width:2.0px;height:3px;background:#6a6b70;border-radius:0px;"></div>
<div style="position:absolute;left:1862.8px;top:1971px;width:2.0px;height:3px;background:#6a6b70;border-radius:0px;"></div>
<div style="position:absolute;left:1879.7px;top:1971px;width:2.0px;height:3px;background:#6a6b70;border-radius:0px;"></div>
<div style="position:absolute;left:1896.2px;top:1970.5px;width:2.7999999999999545px;height:5.5px;background:#fff;border-radius:0px;"></div>
<div style="position:absolute;left:1913.5px;top:1971px;width:2.0px;height:3px;background:#6a6b70;border-radius:0px;"></div>
<div style="position:absolute;left:1930.4px;top:1971px;width:2.0px;height:3px;background:#6a6b70;border-radius:0px;"></div>
<div style="position:absolute;left:1947.3px;top:1971px;width:2.0px;height:3px;background:#6a6b70;border-radius:0px;"></div>
<div style="position:absolute;left:1964.2px;top:1971px;width:2.0px;height:3px;background:#6a6b70;border-radius:0px;"></div>
<div style="position:absolute;left:1980.7px;top:1970.5px;width:2.7999999999999545px;height:5.5px;background:#fff;border-radius:0px;"></div>
<div style="position:absolute;left:1998.0px;top:1971px;width:2.0px;height:3px;background:#6a6b70;border-radius:0px;"></div>
<div style="position:absolute;left:2014.9px;top:1971px;width:2.0px;height:3px;background:#6a6b70;border-radius:0px;"></div>
<div style="position:absolute;left:2031.9px;top:1971px;width:2.0px;height:3px;background:#6a6b70;border-radius:0px;"></div>
<div style="position:absolute;left:2048.8px;top:1971px;width:2.0px;height:3px;background:#6a6b70;border-radius:0px;"></div>
<div style="position:absolute;left:2065.3px;top:1970.5px;width:2.799999999999727px;height:5.5px;background:#fff;border-radius:0px;"></div>
<div style="position:absolute;left:2082.6px;top:1971px;width:2.0px;height:3px;background:#6a6b70;border-radius:0px;"></div>
<div style="position:absolute;left:2099.5px;top:1971px;width:2.0px;height:3px;background:#6a6b70;border-radius:0px;"></div>
<div style="position:absolute;left:2116.4px;top:1971px;width:2.0px;height:3px;background:#6a6b70;border-radius:0px;"></div>
<div style="position:absolute;left:2133.3px;top:1971px;width:2.0px;height:3px;background:#6a6b70;border-radius:0px;"></div>
<div style="position:absolute;left:2149.8px;top:1970.5px;width:2.799999999999727px;height:5.5px;background:#fff;border-radius:0px;"></div>
<div style="position:absolute;left:2167.1px;top:1971px;width:2.0px;height:3px;background:#6a6b70;border-radius:0px;"></div>
<div style="position:absolute;left:2184.0px;top:1971px;width:2.0px;height:3px;background:#6a6b70;border-radius:0px;"></div>
<div style="position:absolute;left:2200.9px;top:1971px;width:2.0px;height:3px;background:#6a6b70;border-radius:0px;"></div>
<div style="position:absolute;left:2217.8px;top:1971px;width:2.0px;height:3px;background:#6a6b70;border-radius:0px;"></div>
<div style="position:absolute;left:2234.3px;top:1970.5px;width:2.799999999999727px;height:5.5px;background:#fff;border-radius:0px;"></div>
<div style="position:absolute;left:2251.6px;top:1971px;width:2.0px;height:3px;background:#6a6b70;border-radius:0px;"></div>
<div style="position:absolute;left:2268.5px;top:1971px;width:2.0px;height:3px;background:#6a6b70;border-radius:0px;"></div>
<div style="position:absolute;left:2285.5px;top:1971px;width:2.0px;height:3px;background:#6a6b70;border-radius:0px;"></div>
<div style="position:absolute;left:2302.4px;top:1971px;width:2.0px;height:3px;background:#6a6b70;border-radius:0px;"></div>
<div style="position:absolute;left:2318.9px;top:1970.5px;width:2.799999999999727px;height:5.5px;background:#fff;border-radius:0px;"></div>
<div style="position:absolute;left:2336.2px;top:1971px;width:2.0px;height:3px;background:#6a6b70;border-radius:0px;"></div>
<div style="position:absolute;left:2353.1px;top:1971px;width:2.0px;height:3px;background:#6a6b70;border-radius:0px;"></div>
<div style="position:absolute;left:2370.0px;top:1971px;width:2.0px;height:3px;background:#6a6b70;border-radius:0px;"></div>
<div style="position:absolute;left:2386.9px;top:1971px;width:2.0px;height:3px;background:#6a6b70;border-radius:0px;"></div>
<div style="position:absolute;left:2403.4px;top:1970.5px;width:2.799999999999727px;height:5.5px;background:#fff;border-radius:0px;"></div>
<div style="position:absolute;top:1975.97px;font-size:20px;font-weight:400;color:#fff;line-height:1;white-space:pre;letter-spacing:-0.3px;left:1379.6px;">-60</div>
<div style="position:absolute;top:1975.97px;font-size:20px;font-weight:400;color:#fff;line-height:1;white-space:pre;letter-spacing:-0.3px;left:475.23333333333335px;width:2000px;text-align:center;">-55</div>
<div style="position:absolute;top:1975.97px;font-size:20px;font-weight:400;color:#fff;line-height:1;white-space:pre;letter-spacing:-0.3px;left:559.7666666666667px;width:2000px;text-align:center;">-50</div>
<div style="position:absolute;top:1975.97px;font-size:20px;font-weight:400;color:#fff;line-height:1;white-space:pre;letter-spacing:-0.3px;left:644.3000000000002px;width:2000px;text-align:center;">-45</div>
<div style="position:absolute;top:1975.97px;font-size:20px;font-weight:400;color:#fff;line-height:1;white-space:pre;letter-spacing:-0.3px;left:728.8333333333335px;width:2000px;text-align:center;">-40</div>
<div style="position:absolute;top:1975.97px;font-size:20px;font-weight:400;color:#fff;line-height:1;white-space:pre;letter-spacing:-0.3px;left:813.3666666666668px;width:2000px;text-align:center;">-35</div>
<div style="position:absolute;top:1975.97px;font-size:20px;font-weight:400;color:#fff;line-height:1;white-space:pre;letter-spacing:-0.3px;left:897.9000000000001px;width:2000px;text-align:center;">-30</div>
<div style="position:absolute;top:1975.97px;font-size:20px;font-weight:400;color:#fff;line-height:1;white-space:pre;letter-spacing:-0.3px;left:982.4333333333336px;width:2000px;text-align:center;">-25</div>
<div style="position:absolute;top:1975.97px;font-size:20px;font-weight:400;color:#fff;line-height:1;white-space:pre;letter-spacing:-0.3px;left:1066.9666666666672px;width:2000px;text-align:center;">-20</div>
<div style="position:absolute;top:1975.97px;font-size:20px;font-weight:400;color:#fff;line-height:1;white-space:pre;letter-spacing:-0.3px;left:1151.5000000000005px;width:2000px;text-align:center;">-15</div>
<div style="position:absolute;top:1975.97px;font-size:20px;font-weight:400;color:#fff;line-height:1;white-space:pre;letter-spacing:-0.3px;left:1236.0333333333338px;width:2000px;text-align:center;">-10</div>
<div style="position:absolute;top:1975.97px;font-size:20px;font-weight:400;color:#fff;line-height:1;white-space:pre;letter-spacing:-0.3px;left:1320.566666666667px;width:2000px;text-align:center;">-5</div>
<div style="position:absolute;top:1975.97px;font-size:20px;font-weight:400;color:#fff;line-height:1;white-space:pre;left:405px;width:2000px;text-align:right;">0</div>
<div style="position:absolute;left:1379px;top:2024.2px;width:874px;height:9.5px;background:#3c404b;border-radius:5px;"></div>
<div style="position:absolute;left:1379px;top:2024.2px;width:576px;height:9.5px;background:#2d83df;border-radius:0px;border-radius:5px 0 0 5px;"></div>
<div style="position:absolute;left:1954px;top:2019px;width:42.5px;height:20px;background:#fff;border-radius:6px;border:1px solid #15161c;"></div>
<svg style="position:absolute;left:2265px;top:2012px;" width="38" height="34" viewBox="0 0 38 34"><path d="M2 10 Q0.7 10 0.7 12 V21 Q0.7 23.5 3 23.5 H7 L16.5 32.8 V1 L7 10 Z" fill="#fff"/><path d="M22.3 9.8 Q28 17 22.3 24.2" fill="none" stroke="#fff" stroke-width="4.2" stroke-linecap="round"/><path d="M30.3 5 Q38.6 17 30.3 29" fill="none" stroke="#fff" stroke-width="4.2" stroke-linecap="round"/></svg>
<div style="position:absolute;left:2331px;top:2000px;width:72px;height:57.80000000000018px;background:#3c404b;border-radius:9px;"></div>
<svg style="position:absolute;left:2361px;top:2009.5px;" width="12" height="39.0" viewBox="0 0 12 39.0"><circle cx="6" cy="6.0" r="4.6" fill="#fff"/><circle cx="6" cy="19.5" r="4.6" fill="#fff"/><circle cx="6" cy="33.0" r="4.6" fill="#fff"/></svg>
<div style="position:absolute;left:1381.7px;top:2164px;width:69.09999999999991px;height:60.30000000000018px;background:#3c404b;border-radius:10px;"></div>
<div style="position:absolute;left:1473.9px;top:2164px;width:69.09999999999991px;height:60.30000000000018px;background:#3c404b;border-radius:10px;"></div>
<div style="position:absolute;left:1459px;top:2169px;width:2px;height:48px;background:#1b1c23;border-radius:0px;"></div>
<svg style="position:absolute;left:1394.6px;top:2181.9px;" width="29" height="29" viewBox="0 0 29 29"><path fill-rule="evenodd" fill="#fff" stroke="#fff" stroke-width="1.8" stroke-linejoin="round" d="M12.31 5.46 L12.64 3.35 L16.36 3.35 L16.69 5.46 L19.34 6.56 L21.07 5.31 L23.69 7.93 L22.44 9.66 L23.54 12.31 L25.65 12.64 L25.65 16.36 L23.54 16.69 L22.44 19.34 L23.69 21.07 L21.07 23.69 L19.34 22.44 L16.69 23.54 L16.36 25.65 L12.64 25.65 L12.31 23.54 L9.66 22.44 L7.93 23.69 L5.31 21.07 L6.56 19.34 L5.46 16.69 L3.35 16.36 L3.35 12.64 L5.46 12.31 L6.56 9.66 L5.31 7.93 L7.93 5.31 L9.66 6.56Z M18.80 14.50 A4.3 4.3 0 1 0 10.20 14.50 A4.3 4.3 0 1 0 18.80 14.50Z"/></svg>
<svg style="position:absolute;left:1415.1px;top:2175.2px;" width="20" height="20" viewBox="0 0 20 20"><path fill-rule="evenodd" fill="#fff" stroke="#fff" stroke-width="1.8" stroke-linejoin="round" d="M8.59 4.17 L8.87 3.19 L11.13 3.19 L11.41 4.17 L13.13 4.88 L14.01 4.39 L15.61 5.99 L15.12 6.87 L15.83 8.59 L16.81 8.87 L16.81 11.13 L15.83 11.41 L15.12 13.13 L15.61 14.01 L14.01 15.61 L13.13 15.12 L11.41 15.83 L11.13 16.81 L8.87 16.81 L8.59 15.83 L6.87 15.12 L5.99 15.61 L4.39 14.01 L4.88 13.13 L4.17 11.41 L3.19 11.13 L3.19 8.87 L4.17 8.59 L4.88 6.87 L4.39 5.99 L5.99 4.39 L6.87 4.88Z M12.50 10.00 A2.5 2.5 0 1 0 7.50 10.00 A2.5 2.5 0 1 0 12.50 10.00Z"/></svg>
<svg style="position:absolute;left:1502.5px;top:2173.5px;" width="12" height="40" viewBox="0 0 12 40"><circle cx="6" cy="6" r="4.6" fill="#fff"/><circle cx="6" cy="20" r="4.6" fill="#fff"/><circle cx="6" cy="34" r="4.6" fill="#fff"/></svg>
<div style="position:absolute;left:2446px;top:1740.7px;width:643px;height:62.799999999999955px;background:#3c404b;border-radius:9px;"></div>
<div style="position:absolute;left:3041.5px;top:1740.7px;width:2.0px;height:62.799999999999955px;background:#1b1c23;border-radius:0px;"></div>
<div style="position:absolute;top:1759.01px;font-size:30px;font-weight:400;color:#fff;line-height:1;white-space:pre;left:2469px;">Fade</div>
<svg style="position:absolute;left:3058.5px;top:1759.5px;" width="16" height="9.5" viewBox="0 0 16 9.5"><path d="M1.4000000000000001 8.1 L8.0 1.6 L14.6 8.1" fill="none" stroke="#fff" stroke-width="2.2" stroke-linecap="round" stroke-linejoin="round"/></svg>
<svg style="position:absolute;left:3058.5px;top:1777.5px;" width="16" height="9.5" viewBox="0 0 16 9.5"><path d="M1.4000000000000001 1.4000000000000001 L8.0 7.9 L14.6 1.4000000000000001" fill="none" stroke="#fff" stroke-width="2.2" stroke-linecap="round" stroke-linejoin="round"/></svg>
<div style="position:absolute;top:1837.61px;font-size:30px;font-weight:400;color:#fff;line-height:1;white-space:pre;left:2442.5px;">Duration</div>
<div style="position:absolute;left:2572px;top:1817.6px;width:514.8000000000002px;height:69.0px;background:#3c404b;border-radius:9px;"></div>
<div style="position:absolute;top:1837.61px;font-size:30px;font-weight:400;color:#fff;line-height:1;white-space:pre;left:2592.4px;">300 ms</div>
<svg style="position:absolute;left:3051.5px;top:1830px;" width="20" height="12.5" viewBox="0 0 20 12.5"><path d="M1.6 10.899999999999999 L10.0 1.8 L18.4 10.899999999999999" fill="none" stroke="#fff" stroke-width="2.6" stroke-linecap="round" stroke-linejoin="round"/></svg>
<svg style="position:absolute;left:3051.5px;top:1861.5px;" width="20" height="12.5" viewBox="0 0 20 12.5"><path d="M1.6 1.6 L10.0 10.7 L18.4 1.6" fill="none" stroke="#fff" stroke-width="2.6" stroke-linecap="round" stroke-linejoin="round"/></svg>
<div style="position:absolute;left:2837.5px;top:1898.5px;width:71.19999999999982px;height:57.700000000000045px;background:#3c404b;border-radius:10px;"></div>
<div style="position:absolute;left:2927px;top:1898.5px;width:72px;height:57.700000000000045px;background:#1c1e28;border-radius:10px;"></div>
<div style="position:absolute;left:3017px;top:1898.5px;width:72px;height:57.700000000000045px;background:#1c1e28;border-radius:10px;"></div>
<div style="position:absolute;left:2857px;top:1925.1px;width:32px;height:4.400000000000091px;background:#fff;border-radius:0px;"></div>
<div style="position:absolute;left:2870.7px;top:1911.1px;width:4.600000000000364px;height:32.40000000000009px;background:#fff;border-radius:0px;"></div>
<svg style="position:absolute;left:2946px;top:1909px;" width="34" height="37" viewBox="0 0 34 37"><rect x="9.4" y="0" width="15.2" height="5" rx="2.5" fill="#d5d6dc"/><rect x="0" y="2.2" width="34" height="5" rx="1.6" fill="#d5d6dc"/><path d="M4.35 9 V28.5 Q4.35 33.75 9.6 33.75 H24.5 Q29.75 33.75 29.75 28.5 V9" fill="none" stroke="#d5d6dc" stroke-width="4.7"/><rect x="11.2" y="11" width="2.7" height="16" fill="#d5d6dc"/><rect x="16" y="11" width="2.4" height="16" fill="#d5d6dc"/><rect x="20.6" y="11" width="2.5" height="16" fill="#d5d6dc"/></svg>
<svg style="position:absolute;left:3047px;top:1907.8px;" width="12" height="39.0" viewBox="0 0 12 39.0"><circle cx="6" cy="6.0" r="4.6" fill="#d5d6dc"/><circle cx="6" cy="19.5" r="4.6" fill="#d5d6dc"/><circle cx="6" cy="33.0" r="4.6" fill="#d5d6dc"/></svg>
<div style="position:absolute;left:3125px;top:1738.3px;width:704.5px;height:85.10000000000014px;background:#3c404b;border-radius:10px;"></div>
<div style="position:absolute;top:1767.45px;font-size:30px;font-weight:400;color:#fff;line-height:1;white-space:pre;left:2477.2px;width:2000px;text-align:center;">Start Streaming</div>
<div style="position:absolute;left:3125px;top:1833px;width:704.5px;height:85.20000000000005px;background:#3c404b;border-radius:10px;"></div>
<div style="position:absolute;top:1862.20px;font-size:30px;font-weight:400;color:#fff;line-height:1;white-space:pre;left:2477.2px;width:2000px;text-align:center;">Start Recording</div>
<div style="position:absolute;left:3125px;top:2004.4px;width:704.5px;height:66.90000000000009px;background:#3c404b;border-radius:10px;"></div>
<div style="position:absolute;top:2024.46px;font-size:30px;font-weight:400;color:#fff;line-height:1;white-space:pre;left:2477.2px;width:2000px;text-align:center;">Studio Mode</div>
<div style="position:absolute;left:3125px;top:2081px;width:704.5px;height:67px;background:#3c404b;border-radius:10px;"></div>
<div style="position:absolute;top:2101.11px;font-size:30px;font-weight:400;color:#fff;line-height:1;white-space:pre;left:2477.2px;width:2000px;text-align:center;">Settings</div>
<div style="position:absolute;left:3125px;top:2157.5px;width:704.5px;height:66.90000000000009px;background:#3c404b;border-radius:10px;"></div>
<div style="position:absolute;top:2177.55px;font-size:30px;font-weight:400;color:#fff;line-height:1;white-space:pre;left:2477.2px;width:2000px;text-align:center;">Exit</div>
<div style="position:absolute;left:3125px;top:1927.5px;width:627.6999999999998px;height:67.5px;background:#3c404b;border-radius:10px;"></div>
<div style="position:absolute;top:1947.31px;font-size:30px;font-weight:400;color:#fff;line-height:1;white-space:pre;left:2439px;width:2000px;text-align:center;">Start Virtual Camera</div>
<div style="position:absolute;left:3762px;top:1927.5px;width:67.5px;height:67.5px;background:#3c404b;border-radius:10px;"></div>
<svg style="position:absolute;left:3777.8px;top:1943.0px;" width="36" height="36" viewBox="0 0 36 36"><path fill-rule="evenodd" fill="#fff" stroke="#fff" stroke-width="1.8" stroke-linejoin="round" d="M14.99 5.56 L15.52 3.10 L20.48 3.10 L21.01 5.56 L24.67 7.07 L26.78 5.71 L30.29 9.22 L28.93 11.33 L30.44 14.99 L32.90 15.52 L32.90 20.48 L30.44 21.01 L28.93 24.67 L30.29 26.78 L26.78 30.29 L24.67 28.93 L21.01 30.44 L20.48 32.90 L15.52 32.90 L14.99 30.44 L11.33 28.93 L9.22 30.29 L5.71 26.78 L7.07 24.67 L5.56 21.01 L3.10 20.48 L3.10 15.52 L5.56 14.99 L7.07 11.33 L5.71 9.22 L9.22 5.71 L11.33 7.07Z M24.88 18.00 A6.88 6.88 0 1 0 11.12 18.00 A6.88 6.88 0 1 0 24.88 18.00Z"/></svg>
<svg style="position:absolute;left:2882px;top:2247px;" width="46" height="36" viewBox="0 0 46 36"><circle cx="22.6" cy="18.4" r="8.5" fill="#9d9c98"/><path d="M9.5 5 Q0.5 14 5.5 28" fill="none" stroke="#9d9c98" stroke-width="4" stroke-linecap="round"/><path d="M14.3 8.8 Q8.5 15 11.5 24.5" fill="none" stroke="#9d9c98" stroke-width="4" stroke-linecap="round"/><path d="M35.5 11.5 Q41.5 18 36 27.5" fill="none" stroke="#9d9c98" stroke-width="4" stroke-linecap="round"/><path d="M40.5 6.5 Q47.5 18 40 31.5" fill="none" stroke="#9d9c98" stroke-width="4" stroke-linecap="round"/><path d="M5.5 33.5 L37.5 1.4" stroke="#1e2029" stroke-width="7.5"/><path d="M5.5 33.5 L37.5 1.4" stroke="#9d9c98" stroke-width="3.8"/></svg>
<svg style="position:absolute;left:3150px;top:2250px;" width="30" height="30" viewBox="0 0 30 30"><circle cx="15.4" cy="15.4" r="11.6" fill="#9d9c98"/><path d="M2.5 26.7 L26.2 2.8" stroke="#1e2029" stroke-width="7"/><path d="M2.5 26.7 L26.2 2.8" stroke="#9d9c98" stroke-width="3.4"/></svg>
<div style="position:absolute;top:2252.34px;font-size:28.3px;font-weight:400;color:#fff;line-height:1;white-space:pre;left:2942px;">LIVE: 00:00:00</div>
<div style="position:absolute;top:2252.34px;font-size:28.3px;font-weight:400;color:#fff;line-height:1;white-space:pre;left:3203px;">REC: 00:00:00</div>
<div style="position:absolute;top:2252.17px;font-size:28.5px;font-weight:400;color:#fff;line-height:1;white-space:pre;left:3445px;">CPU: 0.1%, 59.94 fps</div>
<div style="position:absolute;left:0px;top:2292px;width:3839px;height:1px;background:#484848;border-radius:0px;"></div>
</body></html>
